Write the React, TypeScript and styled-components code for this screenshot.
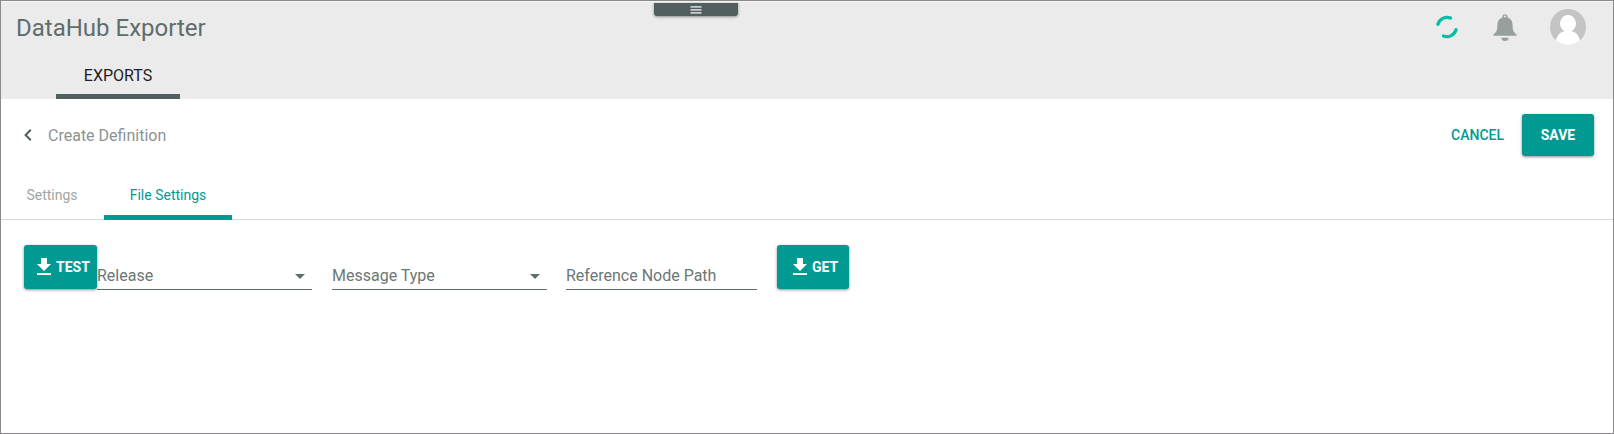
import React from "react";
import styled, { createGlobalStyle } from "styled-components";

const GlobalStyle = createGlobalStyle`
  *, *::before, *::after { box-sizing: border-box; }
  body { margin: 0; background: #fff; font-family: Roboto, "Liberation Sans", sans-serif; }
  button, input { font-family: inherit; }
`;

const Window = styled.div`
  height: 434px;
  border: 1px solid #8b898b;
  background: #fff;
  display: flex;
  flex-direction: column;
`;

const Header = styled.header`
  position: relative;
  height: 98px;
  background: #ebebeb;
  border-top: 1px solid #f7f7f7;
  display: flex;
  flex-direction: column;
  justify-content: space-between;
`;

const HeaderTop = styled.div`
  display: flex;
  justify-content: space-between;
  align-items: center;
  height: 50px;
  padding: 0 27px 0 15px;
`;

const AppTitle = styled.h1`
  margin: 2px 0 0;
  font-size: 24px;
  line-height: 32px;
  font-weight: 400;
  color: #5f6d6b;
`;

const HeaderActions = styled.div`
  display: flex;
  align-items: center;
`;

const BusyIcon = styled.svg`
  display: block;
  margin-right: 34px;
`;

const BellIcon = styled.svg`
  display: block;
  margin-right: 33px;
`;

const AvatarIcon = styled.svg`
  display: block;
`;

const Drawer = styled.button`
  position: absolute;
  top: 1px;
  left: 653px;
  width: 84px;
  height: 13px;
  padding: 0;
  border: 0;
  border-radius: 0 0 3px 3px;
  background: #525f60;
  box-shadow: 0 1px 3px rgba(0, 0, 0, 0.4);
  display: flex;
  justify-content: center;
  align-items: center;
`;

const PrimaryNav = styled.nav`
  display: flex;
  padding-left: 55px;
`;

const PrimaryTab = styled.a`
  width: 124px;
  height: 46px;
  border-bottom: 5px solid #525f60;
  font-size: 16px;
  line-height: 45px;
  text-align: center;
  color: #1f2121;
`;

const PageBar = styled.div`
  display: flex;
  align-items: center;
  justify-content: space-between;
  height: 72px;
  padding: 0 19px 0 23px;
`;

const PageHeading = styled.div`
  display: flex;
  align-items: center;
  gap: 16px;
`;

const PageTitle = styled.h2`
  margin: 0;
  padding-top: 1px;
  font-size: 16px;
  line-height: 21px;
  font-weight: 400;
  color: #8c9392;
`;

const PageActions = styled.div`
  display: flex;
  align-items: center;
  gap: 18px;
`;

const TextButton = styled.button`
  padding: 0;
  border: 0;
  background: none;
  color: #009a93;
  font-size: 14px;
  font-weight: 500;
`;

const FilledButton = styled.button<{ $width: number; $height: number; $inset?: number }>`
  flex: none;
  display: flex;
  align-items: center;
  justify-content: ${(p) => (p.$inset ? "flex-start" : "center")};
  gap: 5px;
  width: ${(p) => p.$width}px;
  height: ${(p) => p.$height}px;
  padding: 0 0 0 ${(p) => p.$inset ?? 0}px;
  border: 0;
  border-radius: 3px;
  background: #009a93;
  color: #fff;
  font-size: 14px;
  font-weight: 700;
  white-space: nowrap;
  box-shadow: 0 1px 3px rgba(0, 0, 0, 0.45);
`;

const SubTabs = styled.nav`
  display: flex;
  height: 49px;
  border-bottom: 1px solid #d6d8d8;
`;

const SubTab = styled.a<{ $width: number; $active?: boolean }>`
  width: ${(p) => p.$width}px;
  height: 49px;
  border-bottom: 5px solid ${(p) => (p.$active ? "#009a93" : "transparent")};
  font-size: 14px;
  line-height: 49px;
  text-align: center;
  color: ${(p) => (p.$active ? "#009a93" : "#9fa5a4")};

  &:first-child { padding-right: 1px; }
`;

const Form = styled.form`
  display: flex;
  align-items: flex-end;
  padding: 25px 0 0 23px;
`;

const Field = styled.div<{ $width: number; $after: number }>`
  display: flex;
  justify-content: space-between;
  align-items: center;
  width: ${(p) => p.$width}px;
  height: 28px;
  margin: 0 ${(p) => p.$after}px -1px 0;
  padding: 0 7px 0 0;
  border-bottom: 1px solid #5f6d6b;
  color: #6b7776;
  font-size: 16px;
  line-height: 27px;
`;

const Glyph = styled.svg`
  display: block;
  flex: none;
`;

const DownloadSvg = styled(Glyph)`
  margin-bottom: 1px;
`;

const DownloadGlyph = () => (
  <DownloadSvg width="14" height="17" viewBox="0 0 14 17" fill="#fff">
    <path d="M4 0h6v6h4l-7 7-7-7h4zM0 15h14v2H0z" />
  </DownloadSvg>
);

const CaretSvg = styled(Glyph)`
  margin-top: 1px;
`;

const Caret = () => (
  <CaretSvg width="10" height="5" viewBox="0 0 10 5" fill="#5f6d6b">
    <path d="M0 0h10L5 5z" />
  </CaretSvg>
);

export default function App() {
  return (
    <>
      <GlobalStyle />
      <Window>
        <Header>
          <HeaderTop>
            <AppTitle>DataHub Exporter</AppTitle>
            <HeaderActions>
              <BusyIcon width="24" height="24" viewBox="0 0 24 24" fill="none" stroke="#00bfa5" strokeWidth="3.3" strokeLinecap="round">
                <path d="M2.900 9.200A9.600 9.600 0 0 1 15.500 3" />
                <path d="M21.100 14.800A9.600 9.600 0 0 1 8.500 21" />
              </BusyIcon>
              <BellIcon width="24" height="28" viewBox="0 -.7 24 28" fill="#98a09f">
                <path fillRule="evenodd" d="M12 .5a2.6 2.6 0 0 1 2.500 3.400c3.700 1.100 5 4 5.100 7.600.1 4.700.7 6.800 3.900 9V22H.5v-1.500c3.200-2.200 3.800-4.300 3.900-9 .1-3.600 1.400-6.500 5.100-7.600A2.600 2.600 0 0 1 12 .5zM12 1.900a1 1 0 0 0 0 2 1 1 0 0 0 0-2z" />
                <path d="M8.500 24h7a3.500 3.300 0 0 1-7 0z" />
              </BellIcon>
              <AvatarIcon width="36" height="36" viewBox="0 0 36 36">
                <clipPath id="avatar-disc"><circle cx="18" cy="18" r="18" /></clipPath>
                <g clipPath="url(#avatar-disc)">
                  <path fill="#c4c4c4" d="M0 0h36v36H0z" />
                  <ellipse cx="18" cy="14.500" rx="8" ry="8.500" fill="#fff" />
                  <path fill="#fff" d="M5.500 36c0-7.500 3.500-12.500 8-13.500L18 20l4.500 2.500c4.500 1 8 6 8 13.500z" />
                </g>
              </AvatarIcon>
            </HeaderActions>
          </HeaderTop>
          <PrimaryNav>
            <PrimaryTab>EXPORTS</PrimaryTab>
          </PrimaryNav>
          <Drawer aria-label="Open drawer">
            <Glyph width="12" height="9" viewBox="0 0 12 9" fill="#c9cdcd">
              <path d="M.5 1h11v1.800H.5zM.5 4h11v1.800H.5zM.5 7h11v1.800H.5z" />
            </Glyph>
          </Drawer>
        </Header>
        <PageBar>
          <PageHeading>
            <Glyph width="8" height="12" viewBox="0 0 8 12" fill="none" stroke="#525f60" strokeWidth="2">
              <path d="M6.800.8L1.600 6l5.200 5.200" />
            </Glyph>
            <PageTitle>Create Definition</PageTitle>
          </PageHeading>
          <PageActions>
            <TextButton>CANCEL</TextButton>
            <FilledButton $width={72} $height={42}>SAVE</FilledButton>
          </PageActions>
        </PageBar>
        <SubTabs>
          <SubTab $width={103}>Settings</SubTab>
          <SubTab $width={128} $active>File Settings</SubTab>
        </SubTabs>
        <Form>
          <FilledButton type="button" $width={73} $height={44} $inset={13}><DownloadGlyph />TEST</FilledButton>
          <Field $width={215} $after={20}>Release<Caret /></Field>
          <Field $width={215} $after={19}>Message Type<Caret /></Field>
          <Field $width={191} $after={20}>Reference Node Path</Field>
          <FilledButton type="button" $width={72} $height={44} $inset={16}><DownloadGlyph />GET</FilledButton>
        </Form>
      </Window>
    </>
  );
}
